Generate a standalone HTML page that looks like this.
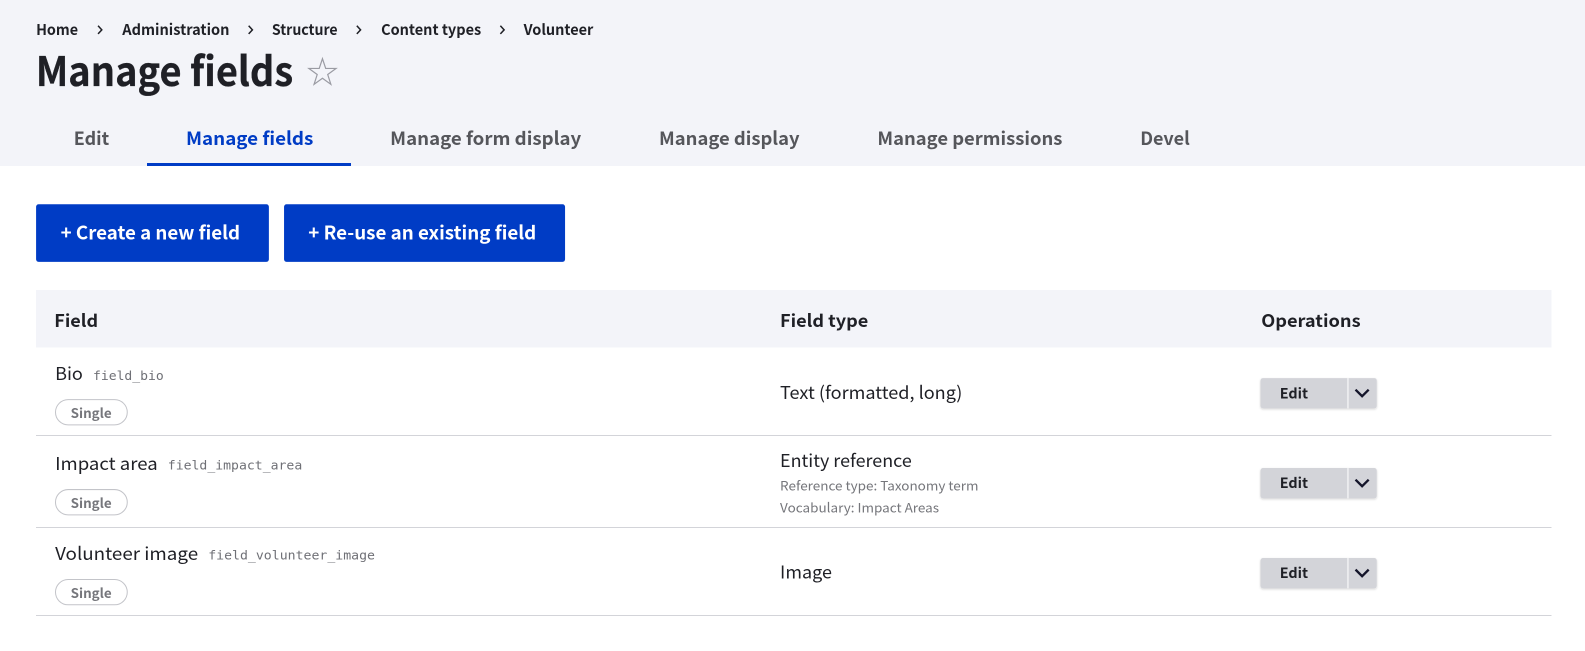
<!DOCTYPE html>
<html lang="en"><head><meta charset="utf-8"><title>Manage fields</title>
<style>
html,body{margin:0;padding:0;background:#fff;width:1585px;height:651px;overflow:hidden}
svg{display:block}
text{font-family:"Noto Sans CJK JP","Liberation Sans",sans-serif;fill:#1f2026;white-space:pre}
.bc{font-size:14.5px;font-weight:700}
.tab{font-size:18px;font-weight:700;fill:#55565b}
.btn{font-size:18.500px;font-weight:700;fill:#fff}
.th{font-size:17px;font-weight:700}
.td{font-size:17.5px}
.mono{font-family:"DejaVu Sans Mono",monospace;font-size:12.5px;fill:#6f7076}
.pill{font-size:13px;font-weight:700;fill:#75767b}
.small{font-size:13px;fill:#75767b}
.edit{font-size:14px;font-weight:700}
.l{shape-rendering:crispEdges}
</style></head><body>
<svg width="1585" height="651" viewBox="0 0 1568 644" xmlns="http://www.w3.org/2000/svg">
<defs><filter id="s" x="-5%" y="-10%" width="110%" height="130%"><feDropShadow dx="0" dy="1" stdDeviation="1" flood-color="#222330" flood-opacity=".18"/></filter></defs>
<rect class="l" width="1568" height="164.200" fill="#f3f4f9"/>
<text class="bc" x="35.700" y="34.700" textLength="41.500" lengthAdjust="spacingAndGlyphs">Home</text>
<text class="bc" x="121" y="34.700" textLength="106" lengthAdjust="spacingAndGlyphs">Administration</text>
<text class="bc" x="269" y="34.700" textLength="65" lengthAdjust="spacingAndGlyphs">Structure</text>
<text class="bc" x="377" y="34.700" textLength="99" lengthAdjust="spacingAndGlyphs">Content types</text>
<text class="bc" x="518" y="34.700" textLength="69" lengthAdjust="spacingAndGlyphs">Volunteer</text>
<g fill="none" stroke="#1f2026" stroke-width="1.500"><path d="M97 25.500l3.700 4-3.700 4"/><path d="M246 25.500l3.700 4-3.700 4"/><path d="M353 25.500l3.700 4-3.700 4"/><path d="M495 25.500l3.700 4-3.700 4"/></g>
<text x="35.500" y="85" textLength="254.500" lengthAdjust="spacingAndGlyphs" style="font-size:40px;font-weight:700;stroke:#1f2026;stroke-width:.3">Manage fields</text>
<path d="M319 58l3.200 9.700h10.200l-8.200 6 3.100 9.700-8.300-6-8.300 6 3.100-9.700-8.200-6h10.200z" fill="none" stroke="#9a9ba3" stroke-width="1.200"/>
<text class="tab" x="73" y="143.600" textLength="35" lengthAdjust="spacingAndGlyphs">Edit</text>
<text class="tab" x="184" y="143.600" textLength="126" lengthAdjust="spacingAndGlyphs" style="fill:#003cc5">Manage fields</text>
<text class="tab" x="386" y="143.600" textLength="189" lengthAdjust="spacingAndGlyphs">Manage form display</text>
<text class="tab" x="652" y="143.600" textLength="139" lengthAdjust="spacingAndGlyphs">Manage display</text>
<text class="tab" x="868" y="143.600" textLength="183" lengthAdjust="spacingAndGlyphs">Manage permissions</text>
<text class="tab" x="1128" y="143.600" textLength="49" lengthAdjust="spacingAndGlyphs">Devel</text>
<rect class="l" x="145.400" y="161.250" width="201.600" height="2.970" fill="#003cc5"/>
<rect x="35.700" y="202" width="230.300" height="57" rx="2.500" fill="#003cc5"/>
<rect x="281" y="202" width="278" height="57" rx="2.500" fill="#003cc5"/>
<text class="btn" x="60" y="237" textLength="177.500" lengthAdjust="spacingAndGlyphs">+ Create a new field</text>
<text class="btn" x="305" y="237" textLength="225.500" lengthAdjust="spacingAndGlyphs">+ Re-use an existing field</text>
<rect class="l" x="35.700" y="287" width="1499.300" height="57" fill="#f3f4f9"/>
<text class="th" x="53.700" y="323.500" textLength="43.300" lengthAdjust="spacingAndGlyphs">Field</text>
<text class="th" x="771.700" y="323.500" textLength="87.300" lengthAdjust="spacingAndGlyphs">Field type</text>
<text class="th" x="1247.700" y="323.500" textLength="98.300" lengthAdjust="spacingAndGlyphs">Operations</text>
<rect class="l" x="35.700" y="430.400" width="1499.300" height=".99" fill="#d3d4d9"/>
<rect class="l" x="35.700" y="521.400" width="1499.300" height=".99" fill="#d3d4d9"/>
<rect class="l" x="35.700" y="608.400" width="1499.300" height=".99" fill="#d3d4d9"/>

<text class="td" x="54.500" y="376" textLength="27.500" lengthAdjust="spacingAndGlyphs">Bio</text>
<text class="mono" x="92" y="375.700" textLength="70" lengthAdjust="spacingAndGlyphs">field_bio</text>
<rect x="54.900" y="395.300" width="71" height="25" rx="12.500" fill="#fff" stroke="#c3c4c9"/>
<text class="pill" x="69.900" y="413.400" textLength="40.600" lengthAdjust="spacingAndGlyphs">Single</text>
<text class="td" x="771.700" y="394.500" textLength="180.300" lengthAdjust="spacingAndGlyphs">Text (formatted, long)</text>

<text class="td" x="54.500" y="465" textLength="101.500" lengthAdjust="spacingAndGlyphs">Impact area</text>
<text class="mono" x="166" y="464.700" textLength="133" lengthAdjust="spacingAndGlyphs">field_impact_area</text>
<rect x="54.900" y="484.300" width="71" height="25" rx="12.500" fill="#fff" stroke="#c3c4c9"/>
<text class="pill" x="69.900" y="502.400" textLength="40.600" lengthAdjust="spacingAndGlyphs">Single</text>
<text class="td" x="771.700" y="462" textLength="130.300" lengthAdjust="spacingAndGlyphs">Entity reference</text>
<text class="small" x="771.700" y="485" textLength="196.300" lengthAdjust="spacingAndGlyphs">Reference type: Taxonomy term</text>
<text class="small" x="771.700" y="507" textLength="157.300" lengthAdjust="spacingAndGlyphs">Vocabulary: Impact Areas</text>

<text class="td" x="54.500" y="554" textLength="141.500" lengthAdjust="spacingAndGlyphs">Volunteer image</text>
<text class="mono" x="206" y="553.700" textLength="165" lengthAdjust="spacingAndGlyphs">field_volunteer_image</text>
<rect x="54.900" y="573.300" width="71" height="25" rx="12.500" fill="#fff" stroke="#c3c4c9"/>
<text class="pill" x="69.900" y="591.400" textLength="40.600" lengthAdjust="spacingAndGlyphs">Single</text>
<text class="td" x="771.700" y="572.500" textLength="51.300" lengthAdjust="spacingAndGlyphs">Image</text>

<g>
<rect x="1247" y="374" width="115" height="30" rx="2.500" fill="#d3d4d9" filter="url(#s)"/>
<rect x="1333" y="374" width="1" height="30" fill="#fff"/>
<text class="edit" x="1266" y="394" textLength="28" lengthAdjust="spacingAndGlyphs">Edit</text>
<path d="M1341 385.500l6.500 6.500 6.500-6.500" fill="none" stroke="#14152a" stroke-width="2.300"/>
</g>
<g>
<rect x="1247" y="463" width="115" height="30" rx="2.500" fill="#d3d4d9" filter="url(#s)"/>
<rect x="1333" y="463" width="1" height="30" fill="#fff"/>
<text class="edit" x="1266" y="483" textLength="28" lengthAdjust="spacingAndGlyphs">Edit</text>
<path d="M1341 474.500l6.500 6.500 6.500-6.500" fill="none" stroke="#14152a" stroke-width="2.300"/>
</g>
<g>
<rect x="1247" y="552" width="115" height="30" rx="2.500" fill="#d3d4d9" filter="url(#s)"/>
<rect x="1333" y="552" width="1" height="30" fill="#fff"/>
<text class="edit" x="1266" y="572" textLength="28" lengthAdjust="spacingAndGlyphs">Edit</text>
<path d="M1341 563.500l6.500 6.500 6.500-6.500" fill="none" stroke="#14152a" stroke-width="2.300"/>
</g>
</svg>
</body></html>
